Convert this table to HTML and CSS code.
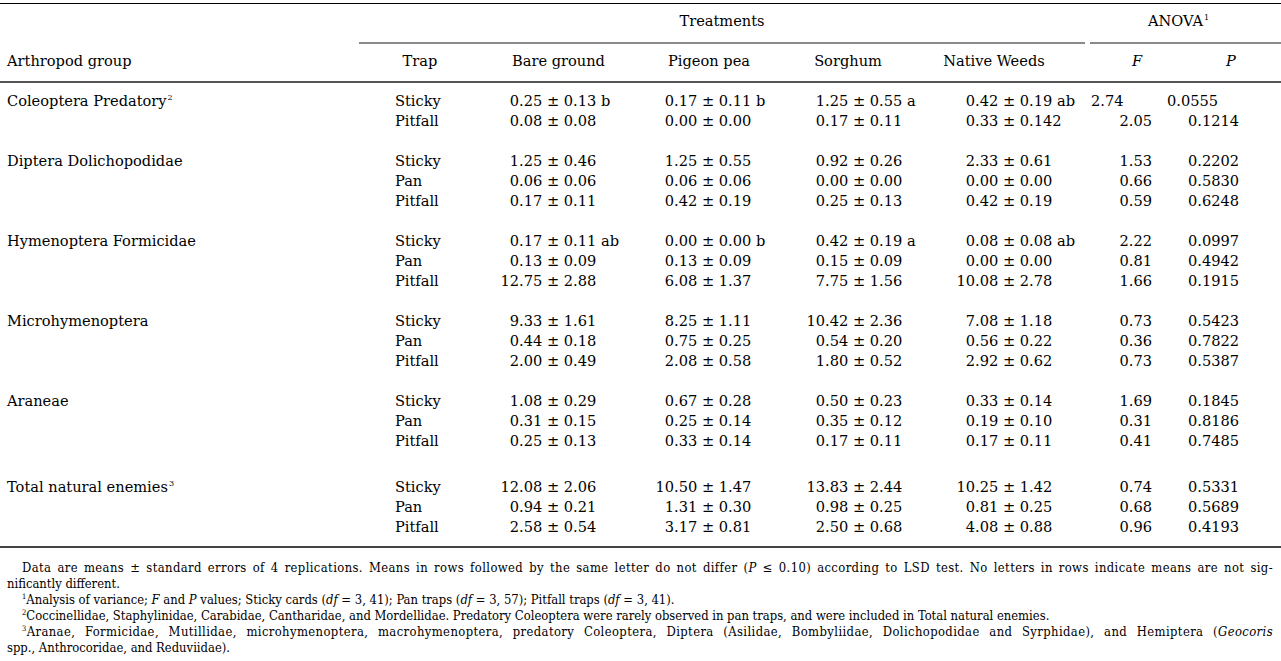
FILE: index.html
```html
<!DOCTYPE html>
<html lang="en">
<head>
<meta charset="utf-8">
<title>Natural enemies by trap type</title>
<link rel="stylesheet" href="styles.css">
</head>
<body>
<div class="page">
<table class="tbl">
<colgroup>
<col class="c-group"><col class="c-trap"><col class="c-bare"><col class="c-pig"><col class="c-sor"><col class="c-nat"><col class="c-f"><col class="c-p">
</colgroup>
<thead>
<tr class="h1">
<th></th>
<th colspan="5"><div class="span-head treat">Treatments</div></th>
<th colspan="2"><div class="span-head anova">ANOVA<sup>1</sup></div></th>
</tr>
<tr class="h2">
<th class="group">Arthropod group</th>
<th>Trap</th>
<th>Bare ground</th>
<th>Pigeon pea</th>
<th>Sorghum</th>
<th class="nat-h">Native Weeds</th>
<th class="f-h"><i>F</i></th>
<th class="p-h"><i>P</i></th>
</tr>
</thead>
<tbody class="grp first">
<tr><td class="group">Coleoptera Predatory<sup>2</sup></td><td class="trap">Sticky</td><td class="v bare"><span class="m">0.25</span> ± 0.13 b</td><td class="v pig"><span class="m">0.17</span> ± 0.11 b</td><td class="v sor"><span class="m">1.25</span> ± 0.55 a</td><td class="v nat"><span class="m">0.42</span> ± 0.19 ab</td><td class="f f-odd">2.74</td><td class="p p-odd">0.0555</td></tr>
<tr><td></td><td class="trap">Pitfall</td><td class="v bare"><span class="m">0.08</span> ± 0.08</td><td class="v pig"><span class="m">0.00</span> ± 0.00</td><td class="v sor"><span class="m">0.17</span> ± 0.11</td><td class="v nat"><span class="m">0.33</span> ± 0.142</td><td class="f">2.05</td><td class="p">0.1214</td></tr>
</tbody>
<tbody class="grp">
<tr><td class="group">Diptera Dolichopodidae</td><td class="trap">Sticky</td><td class="v bare"><span class="m">1.25</span> ± 0.46</td><td class="v pig"><span class="m">1.25</span> ± 0.55</td><td class="v sor"><span class="m">0.92</span> ± 0.26</td><td class="v nat"><span class="m">2.33</span> ± 0.61</td><td class="f">1.53</td><td class="p">0.2202</td></tr>
<tr><td></td><td class="trap">Pan</td><td class="v bare"><span class="m">0.06</span> ± 0.06</td><td class="v pig"><span class="m">0.06</span> ± 0.06</td><td class="v sor"><span class="m">0.00</span> ± 0.00</td><td class="v nat"><span class="m">0.00</span> ± 0.00</td><td class="f">0.66</td><td class="p">0.5830</td></tr>
<tr><td></td><td class="trap">Pitfall</td><td class="v bare"><span class="m">0.17</span> ± 0.11</td><td class="v pig"><span class="m">0.42</span> ± 0.19</td><td class="v sor"><span class="m">0.25</span> ± 0.13</td><td class="v nat"><span class="m">0.42</span> ± 0.19</td><td class="f">0.59</td><td class="p">0.6248</td></tr>
</tbody>
<tbody class="grp">
<tr><td class="group">Hymenoptera Formicidae</td><td class="trap">Sticky</td><td class="v bare"><span class="m">0.17</span> ± 0.11 ab</td><td class="v pig"><span class="m">0.00</span> ± 0.00 b</td><td class="v sor"><span class="m">0.42</span> ± 0.19 a</td><td class="v nat"><span class="m">0.08</span> ± 0.08 ab</td><td class="f">2.22</td><td class="p">0.0997</td></tr>
<tr><td></td><td class="trap">Pan</td><td class="v bare"><span class="m">0.13</span> ± 0.09</td><td class="v pig"><span class="m">0.13</span> ± 0.09</td><td class="v sor"><span class="m">0.15</span> ± 0.09</td><td class="v nat"><span class="m">0.00</span> ± 0.00</td><td class="f">0.81</td><td class="p">0.4942</td></tr>
<tr><td></td><td class="trap">Pitfall</td><td class="v bare"><span class="m">12.75</span> ± 2.88</td><td class="v pig"><span class="m">6.08</span> ± 1.37</td><td class="v sor"><span class="m">7.75</span> ± 1.56</td><td class="v nat"><span class="m">10.08</span> ± 2.78</td><td class="f">1.66</td><td class="p">0.1915</td></tr>
</tbody>
<tbody class="grp">
<tr><td class="group">Microhymenoptera</td><td class="trap">Sticky</td><td class="v bare"><span class="m">9.33</span> ± 1.61</td><td class="v pig"><span class="m">8.25</span> ± 1.11</td><td class="v sor"><span class="m">10.42</span> ± 2.36</td><td class="v nat"><span class="m">7.08</span> ± 1.18</td><td class="f">0.73</td><td class="p">0.5423</td></tr>
<tr><td></td><td class="trap">Pan</td><td class="v bare"><span class="m">0.44</span> ± 0.18</td><td class="v pig"><span class="m">0.75</span> ± 0.25</td><td class="v sor"><span class="m">0.54</span> ± 0.20</td><td class="v nat"><span class="m">0.56</span> ± 0.22</td><td class="f">0.36</td><td class="p">0.7822</td></tr>
<tr><td></td><td class="trap">Pitfall</td><td class="v bare"><span class="m">2.00</span> ± 0.49</td><td class="v pig"><span class="m">2.08</span> ± 0.58</td><td class="v sor"><span class="m">1.80</span> ± 0.52</td><td class="v nat"><span class="m">2.92</span> ± 0.62</td><td class="f">0.73</td><td class="p">0.5387</td></tr>
</tbody>
<tbody class="grp">
<tr><td class="group">Araneae</td><td class="trap">Sticky</td><td class="v bare"><span class="m">1.08</span> ± 0.29</td><td class="v pig"><span class="m">0.67</span> ± 0.28</td><td class="v sor"><span class="m">0.50</span> ± 0.23</td><td class="v nat"><span class="m">0.33</span> ± 0.14</td><td class="f">1.69</td><td class="p">0.1845</td></tr>
<tr><td></td><td class="trap">Pan</td><td class="v bare"><span class="m">0.31</span> ± 0.15</td><td class="v pig"><span class="m">0.25</span> ± 0.14</td><td class="v sor"><span class="m">0.35</span> ± 0.12</td><td class="v nat"><span class="m">0.19</span> ± 0.10</td><td class="f">0.31</td><td class="p">0.8186</td></tr>
<tr><td></td><td class="trap">Pitfall</td><td class="v bare"><span class="m">0.25</span> ± 0.13</td><td class="v pig"><span class="m">0.33</span> ± 0.14</td><td class="v sor"><span class="m">0.17</span> ± 0.11</td><td class="v nat"><span class="m">0.17</span> ± 0.11</td><td class="f">0.41</td><td class="p">0.7485</td></tr>
</tbody>
<tbody class="grp last">
<tr><td class="group">Total natural enemies<sup>3</sup></td><td class="trap">Sticky</td><td class="v bare"><span class="m">12.08</span> ± 2.06</td><td class="v pig"><span class="m">10.50</span> ± 1.47</td><td class="v sor"><span class="m">13.83</span> ± 2.44</td><td class="v nat"><span class="m">10.25</span> ± 1.42</td><td class="f">0.74</td><td class="p">0.5331</td></tr>
<tr><td></td><td class="trap">Pan</td><td class="v bare"><span class="m">0.94</span> ± 0.21</td><td class="v pig"><span class="m">1.31</span> ± 0.30</td><td class="v sor"><span class="m">0.98</span> ± 0.25</td><td class="v nat"><span class="m">0.81</span> ± 0.25</td><td class="f">0.68</td><td class="p">0.5689</td></tr>
<tr><td></td><td class="trap">Pitfall</td><td class="v bare"><span class="m">2.58</span> ± 0.54</td><td class="v pig"><span class="m">3.17</span> ± 0.81</td><td class="v sor"><span class="m">2.50</span> ± 0.68</td><td class="v nat"><span class="m">4.08</span> ± 0.88</td><td class="f">0.96</td><td class="p">0.4193</td></tr>
</tbody>
</table>
<div class="notes">
<p class="note"><span class="jl">Data are means ± standard errors of 4 replications. Means in rows followed by the same letter do not differ (<i>P</i> ≤ 0.10) according to LSD test. No letters in rows indicate means are not sig-</span>nificantly different.</p>
<p class="note"><sup>1</sup>Analysis of variance; <i>F</i> and <i>P</i> values; Sticky cards (<i>df</i> = 3, 41); Pan traps (<i>df</i> = 3, 57); Pitfall traps (<i>df</i> = 3, 41).</p>
<p class="note"><sup>2</sup>Coccinellidae, Staphylinidae, Carabidae, Cantharidae, and Mordellidae. Predatory Coleoptera were rarely observed in pan traps, and were included in Total natural enemies.</p>
<p class="note"><span class="jl"><sup>3</sup>Aranae, Formicidae, Mutillidae, microhymenoptera, macrohymenoptera, predatory Coleoptera, Diptera (Asilidae, Bombyliidae, Dolichopodidae and Syrphidae), and Hemiptera (<i>Geocoris</i></span>spp., Anthrocoridae, and Reduviidae).</p>
</div>
</div>
</body>
</html>
```
FILE: styles.css
```css
html, body {
  margin: 0;
  padding: 0;
  background: #fff;
}
.page {
  width: 1281px;
  padding-top: 3px;
  color: #000;
  font-family: "DejaVu Serif", "Liberation Serif", serif;
  font-size: 14.6px;
  line-height: 20px;
}
.tbl {
  width: 1281px;
  table-layout: fixed;
  border-collapse: collapse;
  border-top: 1px solid #000;
}
.c-group { width: 359px; }
.c-trap { width: 122px; }
.c-bare { width: 155px; }
.c-pig { width: 146px; }
.c-sor { width: 132px; }
.c-nat { width: 174px; }
.c-f { width: 72px; }
.c-p { width: 121px; }

.tbl th, .tbl td {
  padding: 0;
  font-weight: normal;
  white-space: nowrap;
  vertical-align: top;
}
.tbl sup {
  font-size: 8px;
  line-height: 0;
  vertical-align: 6px;
  margin-left: 1px;
}

/* header row 1 */
.h1 th {
  text-align: center;
}
.span-head {
  padding: 7px 0 11px;
  border-bottom: 2px solid #8a8a8a;
}
.treat { margin-right: 3px; }
.anova { margin-left: 2px; padding-right: 14px; }

/* header row 2 */
.h2 th {
  text-align: center;
  padding: 7px 0 10px;
  border-bottom: 2px solid #555;
}
.h2 th.group {
  text-align: left;
  padding-left: 7px;
}
.h2 th.nat-h { padding-right: 14px; }
.h2 th.f-h { padding-left: 26px; }
.h2 th.p-h { padding-left: 21px; }

/* body */
.grp tr:first-child td { padding-top: 20px; }
.grp.first tr:first-child td { padding-top: 8px; }
.grp.last tr:first-child td { padding-top: 26px; }
.grp.last tr:last-child td {
  padding-bottom: 9px;
  border-bottom: 2px solid #444;
}
td.group { padding-left: 7px; }
td.trap { padding-left: 36px; }
td.bare { padding-left: 19px; }
td.pig { padding-left: 19px; }
td.sor { padding-left: 24px; }
td.nat { padding-left: 42px; }
.m {
  display: inline-block;
  width: 2.9em;
  text-align: right;
}
td.f {
  text-align: right;
  padding-right: 8px;
}
.grp td.f.f-odd {
  text-align: left;
  padding-left: 3px;
  padding-right: 0;
}
td.p {
  text-align: left;
  padding-left: 28px;
}
.grp td.p.p-odd { padding-left: 7px; }

/* notes */
.notes {
  padding: 12px 8px 0 7px;
  font-family: "DejaVu Serif Condensed", "DejaVu Serif", serif;
  font-stretch: condensed;
  font-size: 12.9px;
  line-height: 16px;
}
.note {
  margin: 0;
  text-indent: 15px;
}
.note sup {
  font-size: 7.5px;
  line-height: 0;
  vertical-align: 5px;
}
.jl {
  display: block;
  text-align: justify;
  text-align-last: justify;
  letter-spacing: 0.4px;
}
```
